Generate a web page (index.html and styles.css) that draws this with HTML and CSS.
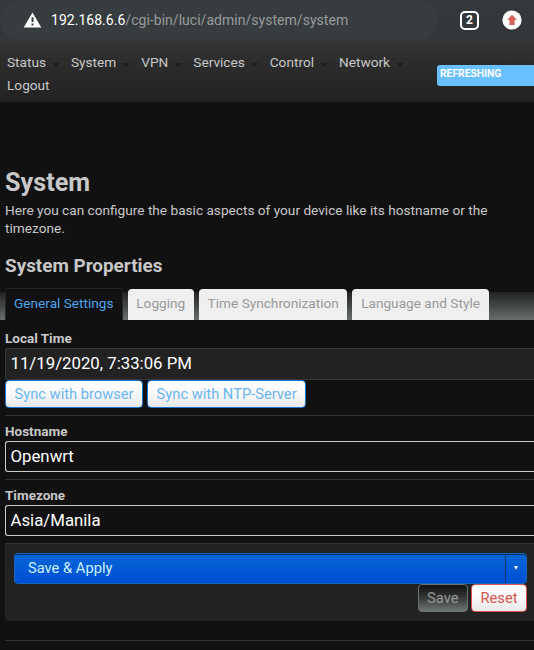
FILE: index.html
```
<!DOCTYPE html>
<html lang="en">
<head>
    <meta charset="UTF-8">
    <meta name="viewport" content="width=device-width, initial-scale=1.0">
    <title>Openwrt - System</title>
    <link rel="stylesheet" href="styles.css">
</head>
<body>
    <header>
        <div class="browser-bar">
            <div class="address">
                <svg class="warning" viewBox="0 0 18 16" width="19" height="16">
                    <path d="M9 0.5 L17.8 15.5 H0.2 Z" fill="#fff"/>
                    <path d="M9 5.3 V10 M9 11.6 V13.6" stroke="#383c3e" stroke-width="2"/>
                </svg>
                <span class="url"><b>192.168.6.6</b>/cgi-bin/luci/admin/system/system</span>
            </div>
            <span class="tab-count">2</span>
            <svg class="update" viewBox="0 0 20 20" width="20" height="20">
                <circle cx="10" cy="10" r="9.6" fill="#fff"/>
                <path d="M10 4.8 L15 10 H12.6 V15 H7.4 V10 H5 Z" fill="#d95f59"/>
            </svg>
        </div>
        <nav class="menu">
            <a class="dropdown">Status</a>
            <a class="dropdown">System</a>
            <a class="dropdown">VPN</a>
            <a class="dropdown">Services</a>
            <a class="dropdown">Control</a>
            <a class="dropdown">Network</a>
            <a>Logout</a>
        </nav>
        <span class="refreshing">REFRESHING</span>
    </header>

    <main>
        <h2>System</h2>
        <p class="description">Here you can configure the basic aspects of your device like its hostname or the timezone.</p>
        <h3>System Properties</h3>
    </main>

    <ul class="tabs">
        <li class="active">General Settings</li>
        <li>Logging</li>
        <li>Time Synchronization</li>
        <li>Language and Style</li>
    </ul>

    <div class="form">
        <div class="row row-time">
            <label>Local Time</label>
            <div class="field readonly">11/19/2020, 7:33:06 PM</div>
            <div class="sync">
                <button class="btn">Sync with browser</button>
                <button class="btn">Sync with NTP-Server</button>
            </div>
        </div>
        <div class="row">
            <label>Hostname</label>
            <div class="field">Openwrt</div>
        </div>
        <div class="row row-last">
            <label>Timezone</label>
            <div class="field">Asia/Manila</div>
        </div>
        <div class="actions">
            <div class="apply">
                <span class="apply-text">Save &amp; Apply</span>
                <span class="apply-arrow"><i></i></span>
            </div>
            <div class="buttons">
                <button class="btn save">Save</button>
                <button class="btn reset">Reset</button>
            </div>
        </div>
    </div>
    <hr>
</body>
</html>
```
FILE: styles.css
```
* {
    box-sizing: border-box;
}

body {
    margin: 0;
    height: 650px;
    overflow: hidden;
    background: #111;
    color: #c8c8c8;
    font-family: Roboto, sans-serif;
    font-size: 13.65px;
}

/* Header */
header {
    position: relative;
    height: 102px;
    background: linear-gradient(#35393b, #343638 40%, #2d2d2d 58%, #222);
}

.browser-bar {
    display: flex;
    align-items: center;
    height: 40px;
}
.address {
    display: flex;
    align-items: center;
    width: 438px;
    height: 40px;
    padding-left: 23px;
    border-radius: 20px;
    background: #373c3e;
}
.warning {
    margin-right: 9px;
}
.url {
    color: #989b9c;
    font-size: 14px;
    letter-spacing: 0.03px;
}
.url b {
    color: #fff;
    font-weight: normal;
}
.tab-count {
    width: 19px;
    height: 19px;
    margin: 0 23px 0 22px;
    border: 2px solid #fff;
    border-radius: 5px;
    color: #fff;
    font-size: 12px;
    font-weight: bold;
    line-height: 15px;
    text-align: center;
}

.menu {
    display: flex;
    flex-wrap: wrap;
    width: 430px;
    padding: 11px 0 0 7px;
    line-height: 23px;
}
.dropdown {
    display: flex;
    align-items: center;
    margin-right: 11px;
}
.dropdown::after {
    content: "";
    margin: 4px 0 0 6px;
    border: 4px solid transparent;
    border-top-color: #1f1f1f;
    border-bottom: 0;
}
.refreshing {
    position: absolute;
    top: 65px;
    right: 0;
    width: 97px;
    height: 21px;
    padding-left: 3px;
    border-radius: 3px 0 0 3px;
    background: #69c0ff;
    color: #fff;
    font-size: 10.3px;
    font-weight: bold;
    line-height: 17px;
}

/* Page title */
main {
    padding: 64px 5px 0;
}
h2 {
    margin: 0;
    font-size: 25.2px;
    line-height: 34px;
}
.description {
    margin: 1px 0 0;
    line-height: 18px;
}
h3 {
    margin: 18px 0 11px;
    font-size: 18.9px;
    line-height: 22px;
}

/* Tabs */
.tabs {
    display: flex;
    gap: 5px;
    height: 32px;
    margin: 0;
    padding: 0 0 0 5px;
    list-style: none;
    background: linear-gradient(#222, #3c403f 35%, #747875) 0 4px no-repeat;
}
.tabs li {
    margin-top: 1px;
    padding: 0 8.7px;
    border-radius: 4px 4px 0 0;
    background: #efefef;
    color: #999;
    line-height: 29px;
}
.tabs .active {
    margin-top: 0;
    padding: 0 8px;
    border: 1px solid #262626;
    border-bottom: 0;
    background: #111;
    color: #4da3ee;
}

/* Form */
.form {
    padding-left: 5px;
}
.row {
    height: 64px;
    border-bottom: 1px solid #333;
    padding-top: 5px;
}
.row-time {
    height: 96px;
    padding-top: 8px;
}
.row-last {
    height: 63px;
    border-bottom: 0;
}
label {
    display: block;
    height: 20px;
    font-size: 13.5px;
    font-weight: bold;
    line-height: 20px;
}
.row-time label,
.row-last label {
    line-height: 21px;
}
.field {
    height: 31px;
    padding-left: 4.5px;
    border: 1px solid #ccc;
    border-right: 0;
    border-radius: 3px 0 0 3px;
    color: #fff;
    font-size: 16.8px;
    line-height: 29px;
}
.readonly {
    height: 32px;
    border-color: #363636;
    background: #222;
}
.btn {
    height: 28px;
    padding: 0 8.5px;
    border: 1px solid #1677d2;
    border-radius: 4px;
    background: linear-gradient(#fff, #f8f8f8 50%, #e8e8e8);
    color: #69b5f1;
    font-family: inherit;
    font-size: 14.7px;
    line-height: 24px;
}
.sync {
    display: flex;
    gap: 4px;
}

/* Save bar */
.actions {
    height: 78px;
    padding: 9px 7px 0 9px;
    border-top: 1px solid #333;
    border-radius: 0 0 0 4px;
    background: #222;
}
.apply {
    display: flex;
    height: 31px;
    border: 1px solid #1467bd;
    border-radius: 4px;
    background: linear-gradient(#0566d6, #004fd5);
    box-shadow: inset 0 1px #092d60;
    color: #c9f0ff;
    font-size: 14.7px;
    line-height: 28px;
}
.apply-text {
    flex: 1;
    padding-left: 13px;
}
.apply-arrow {
    display: flex;
    align-items: center;
    justify-content: center;
    width: 21px;
    border-left: 1px solid #08306a;
}
.apply-arrow i {
    margin-bottom: 1px;
    border: 2.5px solid transparent;
    border-top: 4px solid #e3f6ff;
    border-bottom: 0;
}
.buttons {
    display: flex;
    justify-content: flex-end;
    gap: 3px;
}
.save {
    border-color: #6b706e;
    background: linear-gradient(#111, #303433 45%, #6e7572);
    color: #999;
}
.reset {
    border-color: #d9534f;
    color: #d9534f;
}

hr {
    margin: 19px 0 0 5px;
    border: 0;
    border-top: 1px solid #333;
}
```
